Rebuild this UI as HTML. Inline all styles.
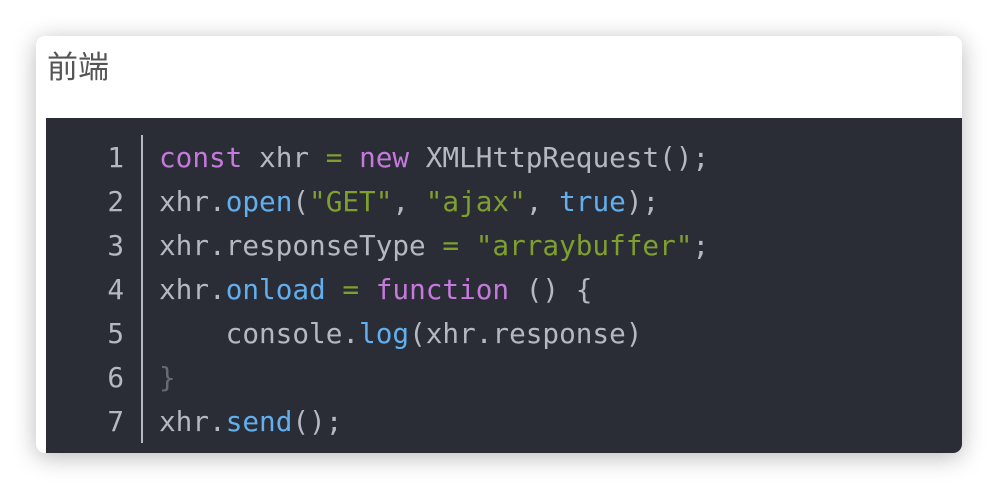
<!DOCTYPE html>
<html><head><meta charset="utf-8"><style>
html,body{margin:0;padding:0;background:#fff;width:998px;height:490px;overflow:hidden}
.card{position:absolute;left:36px;top:36px;width:926px;height:417px;background:#fff;border-radius:9px;box-shadow:0 4px 24px rgba(0,0,0,.28);overflow:hidden}
.t{position:absolute;left:11px;top:6px;font:31px "Liberation Sans","Noto Sans CJK SC",sans-serif;color:#555}
.code{position:absolute;left:10px;top:82px;right:0;bottom:0;background:#2a2d36}
.ln{position:absolute;left:0;top:18px;width:78px;text-align:right;color:#b4b8c0}
.sep{position:absolute;left:95px;top:17px;width:2px;height:308px;background:#b4b8c0}
.src{position:absolute;left:113px;top:18px;color:#b4b8c0}
.ln,.src{font:27.7px "DejaVu Sans Mono","Liberation Mono",monospace;line-height:44px;white-space:pre}
.k{color:#c678dd}.f{color:#61afef}.s{color:#7f9f2f}.o{color:#7f9f2f}.d{color:#666a74}
</style></head><body>
<div class="card"><div class="t">前端</div>
<div class="code"><div class="ln">1
2
3
4
5
6
7</div><div class="sep"></div><div class="src"><span class="k">const</span> xhr <span class="o">=</span> <span class="k">new</span> XMLHttpRequest();
xhr.<span class="f">open</span>(<span class="s">"GET"</span>, <span class="s">"ajax"</span>, <span class="f">true</span>);
xhr.responseType <span class="o">=</span> <span class="s">"arraybuffer"</span>;
xhr.<span class="f">onload</span> <span class="o">=</span> <span class="k">function</span> () {
    console.<span class="f">log</span>(xhr.response)
<span class="d">}</span>
xhr.<span class="f">send</span>();</div></div></div>
</body></html>
